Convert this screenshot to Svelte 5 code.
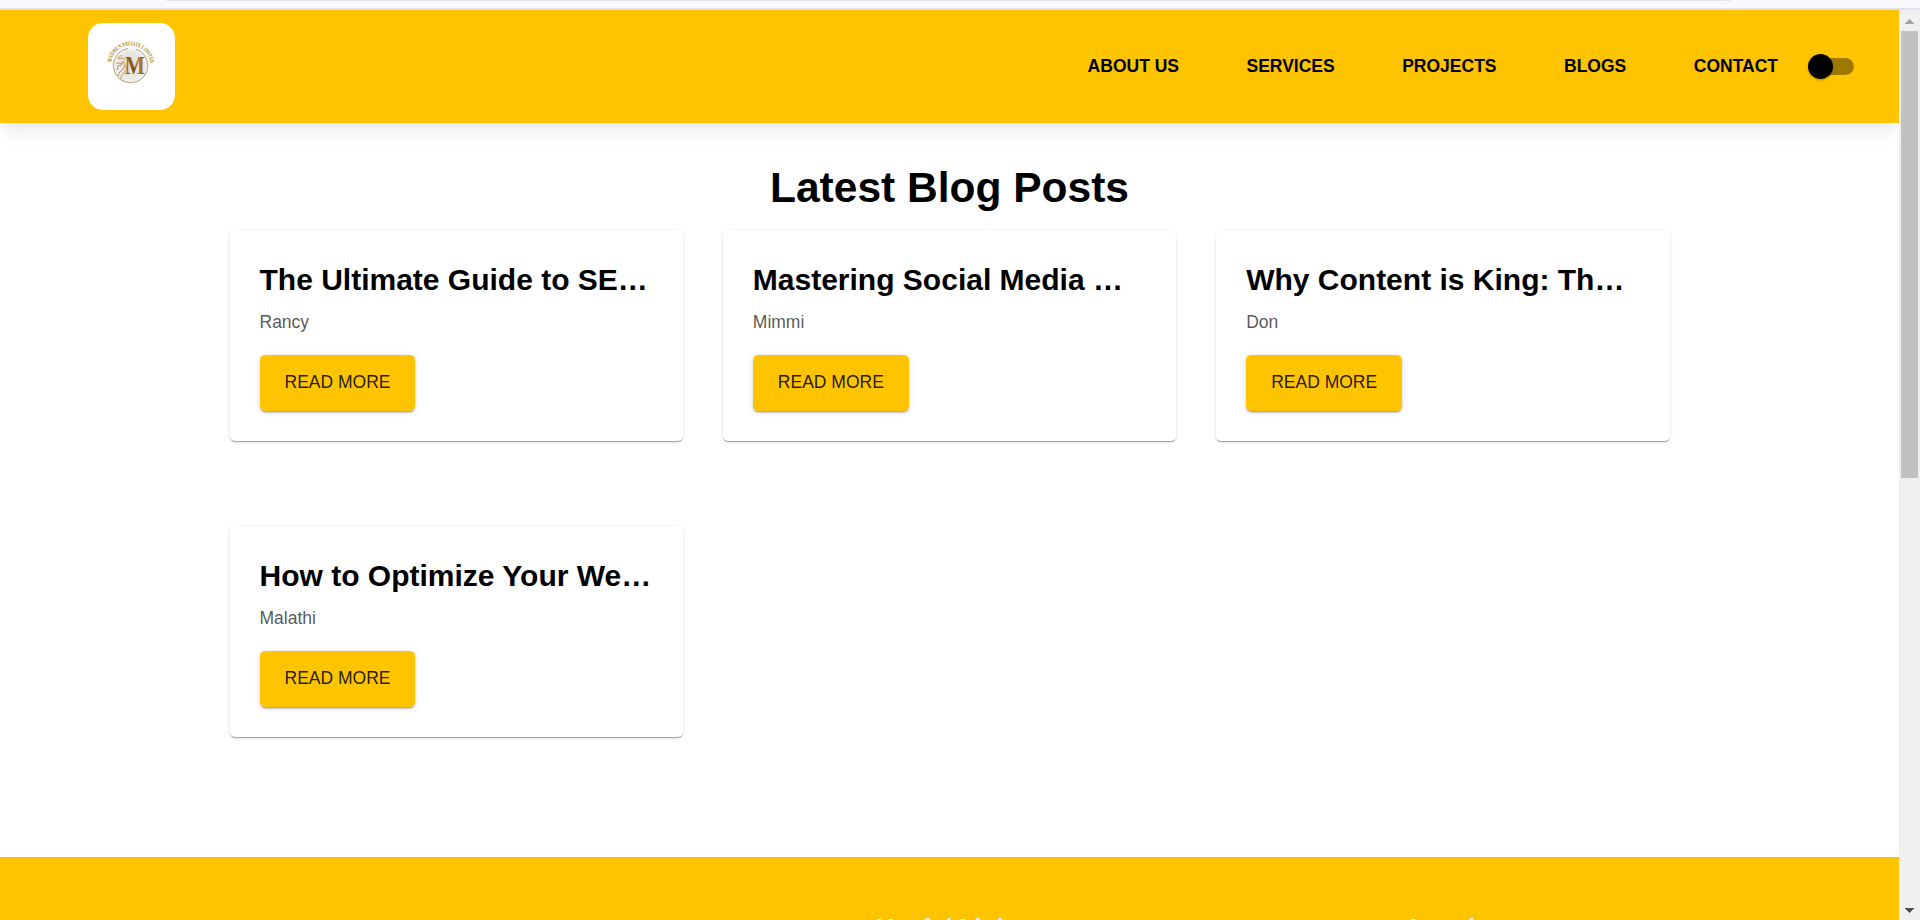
<script>
  const links = ['About us', 'Services', 'Projects', 'Blogs', 'Contact'];
  const posts = [
    { title: 'The Ultimate Guide to SE…', author: 'Rancy' },
    { title: 'Mastering Social Media …', author: 'Mimmi' },
    { title: 'Why Content is King: Th…', author: 'Don' },
    { title: 'How to Optimize Your We…', author: 'Malathi' }
  ];
  let dark = $state(false);
</script>

<div class="window">
  <div class="chrome"><span></span></div>
  <div class="viewport">
    <div class="page">
      <header>
        <a class="logo" href="#home" aria-label="Home">
          <svg width="87" height="87" viewBox="0 0 87 87">
            <defs>
              <radialGradient id="disc">
                <stop offset="0" stop-color="#e2ddd6" />
                <stop offset=".75" stop-color="#ece9e5" />
                <stop offset="1" stop-color="#fbfaf8" />
              </radialGradient>
              <linearGradient id="gold" x1="0" x2="1">
                <stop offset="0" stop-color="#a76f1c" />
                <stop offset=".5" stop-color="#7d4c0c" />
                <stop offset=".7" stop-color="#b98231" />
                <stop offset="1" stop-color="#80500f" />
              </linearGradient>
              <path id="arc" d="M23 39.5 A19.8 19.8 0 0 1 62.2 39.5 L62.8 44" />
            </defs>
            <circle cx="42.6" cy="42.5" r="18.3" fill="url(#disc)" />
            <circle cx="42.6" cy="42.5" r="17.2" fill="none" stroke="#aa8c58" stroke-width=".8" stroke-dasharray="78 8 22 0" />
            <path d="M34 33q-4-1-4 3 5-2 7 1M28 41q2-3 4 0l3-2q-1 4-5 4l-1 4M35 38q4 5-1 9t-3 6M38 42q2 5-2 8t-3 6" fill="none" stroke="#c08f50" stroke-width=".9" />
            <text x="36.8" y="50.8" class="mono" textLength="20" lengthAdjust="spacingAndGlyphs">M</text>
            <text class="ring"><textPath href="#arc" textLength="57" lengthAdjust="spacingAndGlyphs">MADMUN PRIVATE LIMITED</textPath></text>
          </svg>
        </a>
        <nav>
          {#each links as link}<a href="#top">{link}</a>{/each}
        </nav>
        <button class="switch" class:dark aria-label="Toggle theme" onclick={() => (dark = !dark)}>
          <span class="thumb"></span>
        </button>
      </header>
      <main>
        <h1>Latest Blog Posts</h1>
        <div class="grid">
          {#each posts as post}
            <article>
              <h2>{post.title}</h2>
              <p>{post.author}</p>
              <button class="more">READ MORE</button>
            </article>
          {/each}
        </div>
      </main>
      <footer>
        <div class="about"></div>
        <h3>Useful Links</h3>
        <h3>Legal</h3>
      </footer>
    </div>
    <div class="scroll">
      <svg class="up" width="9" height="5" shape-rendering="crispEdges"><path d="M4.5 0L9 5H0z" fill="#a3a3a3" /></svg>
      <div class="bar"></div>
      <svg class="down" width="9" height="5" shape-rendering="crispEdges"><path d="M4.5 5L9 0H0z" fill="#505050" /></svg>
    </div>
  </div>
</div>

<style>
  :global(body) { margin: 0; overflow: hidden; }
  .window {
    height: 920px;
    display: flex;
    flex-direction: column;
    overflow: hidden;
    background: #fff;
    font-family: "Liberation Sans", Arial, sans-serif;
    font-size: 17.5px;
    color: #000;
  }
  .chrome { height: 8px; flex: none; background: #f9f8ff; border-bottom: 2px solid #dfe2ee; }
  .chrome span { display: block; height: 1px; margin: 0 189px 0 166px; background: #e3e4ef; }
  .viewport { flex: 1; min-height: 0; display: flex; }
  .page { flex: 1; min-width: 0; display: flex; flex-direction: column; overflow: hidden; }
  header {
    height: 113px;
    flex: none;
    box-sizing: border-box;
    padding: 0 45px 0 88px;
    display: flex;
    align-items: center;
    background: #ffc400;
    box-shadow: 0 12.5px 18.75px -3.75px rgba(0, 0, 0, .08), 0 5px 7.5px -2.5px rgba(0, 0, 0, .04);
  }
  .logo { width: 87px; height: 87px; border-radius: 15px; background: #fff; overflow: hidden; }
  .logo svg { display: block; }
  .mono { font: bold 25px "Liberation Serif", serif; fill: url(#gold); }
  .ring { font: bold 6px "Liberation Serif", serif; fill: #a5861a; }
  nav { margin: 0 0 2px auto; display: flex; gap: 67.5px; }
  nav a { color: #000; text-decoration: none; text-transform: uppercase; font-weight: 700; line-height: 20px; }
  .switch {
    width: 42.5px;
    height: 17px;
    margin: 0 0 0 33.5px;
    padding: 0;
    border: 0;
    border-radius: 9px;
    background: rgba(0, 0, 0, .38);
    display: flex;
    align-items: center;
  }
  .thumb {
    width: 25px;
    height: 25px;
    flex: none;
    margin-left: -3.5px;
    border-radius: 50%;
    background: #000;
    box-shadow: 0 1.25px 1.25px rgba(0, 0, 0, .14), 0 1.25px 3.75px rgba(0, 0, 0, .12);
  }
  .dark .thumb { margin-left: 21px; }
  main { width: 1440px; height: 734px; flex: none; margin: 0 auto; box-sizing: border-box; padding-top: 39px; }
  h1 { margin: 0 0 15.5px; text-align: center; font-size: 42.5px; line-height: 52.5px; }
  .grid { display: grid; grid-template-columns: repeat(3, 1fr); column-gap: 40px; row-gap: 85px; }
  article {
    padding: 29px 30px 30px;
    border-radius: 5px;
    background: #fff;
    box-shadow: 0 2px 1px -1px rgba(0, 0, 0, .2), 0 1px 1px rgba(0, 0, 0, .14), 0 1px 3.75px rgba(0, 0, 0, .12);
  }
  h2 { margin: 0; font-size: 30px; line-height: 41px; white-space: nowrap; }
  p { margin: 9px 0 20px; line-height: 26px; color: rgba(0, 0, 0, .68); }
  .more {
    display: block;
    height: 56px;
    padding: 0 25px 2px;
    border: 0;
    border-radius: 5px;
    background: #ffc400;
    color: rgba(0, 0, 0, .87);
    font: 17.5px "Liberation Sans", Arial, sans-serif;
    box-shadow: 0 3px 1px -2px rgba(0, 0, 0, .2), 0 2px 2px rgba(0, 0, 0, .14), 0 1px 6px rgba(0, 0, 0, .12);
  }
  footer {
    flex: 1;
    display: grid;
    grid-template-columns: 876px 534px 1fr;
    padding-top: 57px;
    background: #ffc400;
    color: #f3eef0;
  }
  h3 { margin: 0; font-size: 25px; line-height: 29px; }
  .scroll { width: 21px; flex: none; display: flex; flex-direction: column; align-items: center; background: #f0f0f0; }
  .up { margin: 9px 0 7px; }
  .bar { width: 17px; height: 447px; background: #c1c1c1; }
  .down { margin-top: auto; margin-bottom: 7px; }
</style>
